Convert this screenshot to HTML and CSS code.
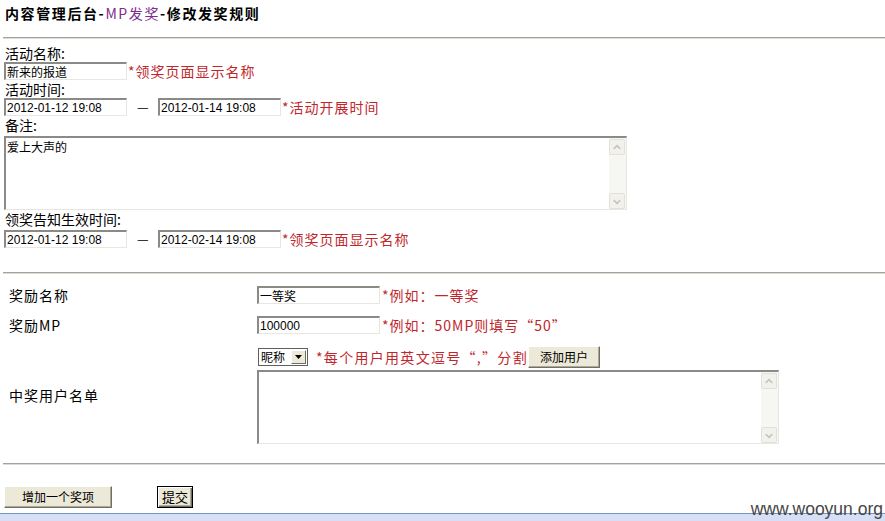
FILE: index.html
```html
<!DOCTYPE html>
<html lang="zh-CN">
<head>
<meta charset="utf-8">
<title>修改发奖规则</title>
<link rel="stylesheet" href="styles.css">
</head>
<body>
<div class="page">
  <h1 class="title">内容管理后台-<span class="crumb">MP发奖</span>-修改发奖规则</h1>
  <div class="rule rule-top"></div>

  <section class="basic">
    <div class="label first">活动名称:</div>
    <div class="row">
      <input class="field" type="text" value="新来的报道">
      <span class="hint">*领奖页面显示名称</span>
    </div>
    <div class="label">活动时间:</div>
    <div class="row">
      <input class="field num" type="text" value="2012-01-12 19:08">
      <span class="dash">—</span>
      <input class="field num" type="text" value="2012-01-14 19:08">
      <span class="hint">*活动开展时间</span>
    </div>
    <div class="label">备注:</div>
    <div class="memo memo-wide">
      <textarea class="memo-input">爱上大声的</textarea>
      <div class="vscroll">
        <span class="sb-btn"><svg width="15" height="15" viewBox="0 0 15 15"><path d="M4 9 L7.5 5.5 L11 9" fill="none" stroke="#c4c4bc" stroke-width="1.6"/></svg></span>
        <span class="sb-track"></span>
        <span class="sb-btn"><svg width="15" height="15" viewBox="0 0 15 15"><path d="M4 6 L7.5 9.5 L11 6" fill="none" stroke="#c4c4bc" stroke-width="1.6"/></svg></span>
      </div>
    </div>
    <div class="label">领奖告知生效时间:</div>
    <div class="row row-gap">
      <input class="field num" type="text" value="2012-01-12 19:08">
      <span class="dash">—</span>
      <input class="field num" type="text" value="2012-02-14 19:08">
      <span class="hint">*领奖页面显示名称</span>
    </div>
  </section>

  <div class="rule rule-mid"></div>

  <section class="prize">
    <div class="prize-row pr-1">
      <div class="plabel">奖励名称</div>
      <div class="pfield">
        <input class="field" type="text" value="一等奖">
        <span class="hint">*例如：一等奖</span>
      </div>
    </div>
    <div class="prize-row pr-2">
      <div class="plabel">奖励MP</div>
      <div class="pfield">
        <input class="field num" type="text" value="100000">
        <span class="hint">*例如：50MP则填写“50”</span>
      </div>
    </div>
    <div class="prize-row pr-3">
      <div class="plabel">中奖用户名单</div>
      <div class="pfield stack">
        <div class="ctrl">
          <span class="selectbox" role="combobox" aria-expanded="false">
            <span class="nick">昵称</span>
            <span class="drop"><svg width="9" height="5" viewBox="0 0 9 5"><path d="M0 0 H9 L4.5 5 Z" fill="#000"/></svg></span>
          </span>
          <span class="hint hint-users">*每个用户用英文逗号“,”分割</span>
          <button class="btn btn-add" type="button">添加用户</button>
        </div>
        <div class="memo memo-users">
          <textarea class="memo-input"></textarea>
          <div class="vscroll">
            <span class="sb-btn"><svg width="15" height="15" viewBox="0 0 15 15"><path d="M4 9 L7.5 5.5 L11 9" fill="none" stroke="#c4c4bc" stroke-width="1.6"/></svg></span>
            <span class="sb-track"></span>
            <span class="sb-btn"><svg width="15" height="15" viewBox="0 0 15 15"><path d="M4 6 L7.5 9.5 L11 6" fill="none" stroke="#c4c4bc" stroke-width="1.6"/></svg></span>
          </div>
        </div>
      </div>
    </div>
  </section>

  <div class="rule rule-bottom"></div>

  <div class="actions">
    <button class="btn btn-more" type="button">增加一个奖项</button>
    <button class="btn btn-submit" type="button">提交</button>
  </div>
</div>
<footer class="status"></footer>
<span class="watermark">www.wooyun.org</span>
</body>
</html>
```

FILE: styles.css
```css
html, body {
  margin: 0;
  padding: 0;
}

body {
  width: 885px;
  height: 521px;
  overflow: hidden;
  background: #ffffff;
  color: #000000;
  font-family: "Noto Sans CJK SC", "Liberation Sans", sans-serif;
  display: flex;
  flex-direction: column;
  position: relative;
}

.page {
  flex: 1;
  padding-left: 4px;
}

.title {
  margin: 0;
  padding: 3px 0 0 1px;
  height: 20px;
  font-size: 14px;
  line-height: 20px;
  font-weight: bold;
  letter-spacing: 1.6px;
  white-space: nowrap;
}

.crumb {
  color: #7d2a8c;
  font-weight: normal;
}

.rule {
  height: 0;
  border-top: 1px solid #a3a39c;
  border-bottom: 1px solid #dcdcd6;
  margin-left: -1px;
}

.rule-top { margin-top: 14px; }
.rule-mid { margin-top: 24px; }
.rule-bottom { margin-top: 19px; }

/* section 1 */
.basic {
  display: flex;
  flex-direction: column;
  align-items: flex-start;
}

.label {
  font-size: 14px;
  line-height: 18px;
  height: 18px;
  padding-left: 1px;
  white-space: nowrap;
}

.label.first { margin-top: 5px; }

.row {
  display: flex;
  align-items: center;
  height: 18px;
}

.row-gap { margin-top: 2px; }

.field {
  box-sizing: border-box;
  width: 123px;
  height: 18px;
  margin: 0;
  padding: 0 0 0 1px;
  border-top: 2px solid #8a8a86;
  border-left: 2px solid #8a8a86;
  border-right: 1px solid #e6e6e2;
  border-bottom: 1px solid #e6e6e2;
  background: #ffffff;
  font-family: "Noto Sans CJK SC", sans-serif;
  font-size: 12px;
  line-height: 14px;
  color: #000;
  outline: none;
}

.field.num {
  font-family: "Liberation Sans", "Noto Sans CJK SC", sans-serif;
  font-size: 12px;
}

.dash {
  width: 11px;
  margin: 0 10px;
  font-size: 13px;
  line-height: 18px;
  text-align: center;
}

.hint {
  margin-left: 1px;
  color: #c0272d;
  font-size: 14px;
  line-height: 18px;
  letter-spacing: 1px;
  white-space: nowrap;
}

/* textarea with XP style disabled scrollbar */
.memo {
  box-sizing: border-box;
  display: flex;
  border-top: 2px solid #8a8a86;
  border-left: 2px solid #8a8a86;
  border-right: 1px solid #e6e6e2;
  border-bottom: 1px solid #e6e6e2;
  background: #ffffff;
}

.memo-wide {
  width: 623px;
  height: 74px;
  margin-top: 2px;
}

.memo-users {
  width: 522px;
  height: 74px;
  margin-top: 2px;
}

.memo-input {
  flex: 1;
  border: 0;
  margin: 0;
  padding: 2px 1px;
  resize: none;
  outline: none;
  overflow: hidden;
  font-family: "Noto Sans CJK SC", sans-serif;
  font-size: 12px;
  line-height: 14px;
  background: transparent;
}

.vscroll {
  width: 17px;
  display: flex;
  flex-direction: column;
  padding-top: 1px;
  background: #f6f6f2;
}

.sb-btn {
  box-sizing: border-box;
  width: 16px;
  height: 16px;
  border: 1px solid #e2e1da;
  border-radius: 2px;
  background: #f2f1ec;
  display: flex;
  align-items: center;
  justify-content: center;
}

.sb-track { flex: 1; }

/* prize section */
.prize-row {
  display: flex;
  align-items: center;
}

.pr-1 { margin-top: 12px; }
.pr-2 { margin-top: 12px; }
.pr-3 { margin-top: 12px; }

.plabel {
  box-sizing: border-box;
  width: 253px;
  padding-left: 5px;
  font-size: 14px;
  line-height: 18px;
  letter-spacing: 1px;
  white-space: nowrap;
}

.pfield {
  display: flex;
  align-items: center;
  height: 18px;
}

.pfield .hint { margin-left: 2px; }

.pfield.stack {
  height: auto;
  flex-direction: column;
  align-items: flex-start;
}

.ctrl {
  display: flex;
  align-items: center;
  height: 22px;
  padding-left: 1px;
}

.selectbox {
  position: relative;
  box-sizing: border-box;
  display: block;
  width: 50px;
  height: 18px;
  border: 1px solid #5f5f5f;
  background: #ffffff;
}

.nick {
  display: block;
  padding-left: 2px;
  font-size: 12px;
  line-height: 16px;
  color: #000;
  white-space: nowrap;
}

.drop {
  position: absolute;
  top: 1px;
  right: 1px;
  box-sizing: border-box;
  width: 15px;
  height: 14px;
  background: #ece9d8;
  border: 1px solid;
  border-color: #ffffff #716f64 #716f64 #ffffff;
  display: flex;
  align-items: center;
  justify-content: center;
}

.drop svg { width: 7px; height: 4px; }

.pfield .hint-users {
  margin-left: 8px;
  letter-spacing: 1.3px;
}

.btn {
  box-sizing: border-box;
  height: 22px;
  margin: 0;
  padding: 0;
  background: #ece9d8;
  border: 1px solid;
  border-color: #ffffff #716f64 #716f64 #ffffff;
  box-shadow: inset -1px -1px 0 #aca899;
  font-family: "Noto Sans CJK SC", sans-serif;
  font-size: 12px;
  line-height: 18px;
  color: #000;
}

.btn-add {
  width: 72px;
  margin-left: 0;
}

.actions {
  display: flex;
  align-items: center;
  margin-top: 21px;
}

.btn-more { width: 108px; }

.btn-submit {
  width: 36px;
  margin-left: 45px;
  border: 1px solid #000000;
  box-shadow: inset 1px 1px 0 #ffffff, inset -1px -1px 0 #716f64, inset -2px -2px 0 #aca899;
  font-size: 13px;
}

/* bottom strip */
.status {
  height: 7px;
  border-top: 1px solid #7494c4;
  background: #d6dff6;
}

.watermark {
  position: absolute;
  top: 500px;
  right: 2px;
  font-family: "Liberation Sans", Arial, sans-serif;
  font-size: 17.5px;
  line-height: 18px;
  color: #474747;
}
```
